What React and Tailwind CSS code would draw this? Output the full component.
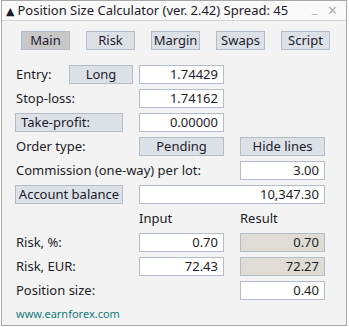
import React from "react";

const font = { fontFamily: '"Noto Sans", "DejaVu Sans", sans-serif' };

function Btn({ children, className = "", active = false }) {
  return (
    <div
      className={`h-[19px] flex items-center border border-[#b4bcc8] text-[13px] leading-none text-[#1c1c28] ${
        active ? "bg-[#c8c8c8]" : "bg-[#dce1e8]"
      } ${className}`}
    >
      {children}
    </div>
  );
}

function Field({ children, className = "", result = false }) {
  return (
    <div
      className={`h-[19px] flex items-center justify-end pr-[5px] border border-[#b4bcc8] text-[13px] leading-none text-[#1c1c28] ${
        result ? "bg-[#dedcd4]" : "bg-white"
      } ${className}`}
    >
      {children}
    </div>
  );
}

function Label({ children }) {
  return (
    <div className="h-[19px] flex items-center pl-[1px] text-[13px] leading-none text-[#1c1c28]">
      {children}
    </div>
  );
}

function C3({ children }) {
  return <div className="pl-[16px]">{children}</div>;
}

export default function App() {
  return (
    <div className="w-[349px] h-[327px] bg-white" style={font}>
      <div className="ml-[1px] w-[346px] h-[326px] border border-[#a8a8a8] bg-[#f3f3f3] flex flex-col">
        <div className="h-[20px] border-b border-[#d4d4d4] bg-[#f9f9f9] flex items-center pl-[4px] pr-[8px] text-[13px] leading-none text-[#1c1c28]">
          <span className="text-[11px] mr-[3px]">▲</span>
          <span>Position Size Calculator (ver. 2.42) Spread: 45</span>
          <span className="ml-auto text-[#b0b0b0] text-[12px] mr-[10px] -mt-[4px]">_</span>
          <span className="text-[#b0b0b0] text-[13px] font-bold">✕</span>
        </div>
        <div className="flex gap-[16px] pl-[19px] mt-[10px]">
          <Btn active className="w-[49px] justify-center">Main</Btn>
          <Btn className="w-[49px] justify-center">Risk</Btn>
          <Btn className="w-[49px] justify-center">Margin</Btn>
          <Btn className="w-[49px] justify-center">Swaps</Btn>
          <Btn className="w-[49px] justify-center">Script</Btn>
        </div>
        <div className="grid grid-cols-[124px_85px_101px] gap-y-[5px] pl-[13px] mt-[15px]">
          <div className="flex items-center justify-between">
            <Label>Entry:</Label>
            <Btn className="w-[64px] mr-[6px] justify-center">Long</Btn>
          </div>
          <Field>1.74429</Field>
          <div />

          <Label>Stop-loss:</Label>
          <Field>1.74162</Field>
          <div />

          <div className="flex">
            <Btn className="w-[108px] pl-[5px]">Take-profit:</Btn>
          </div>
          <Field>0.00000</Field>
          <div />

          <Label>Order type:</Label>
          <Btn className="justify-center">Pending</Btn>
          <C3>
            <Btn className="justify-center">Hide lines</Btn>
          </C3>

          <div className="col-span-2">
            <Label>Commission (one-way) per lot:</Label>
          </div>
          <C3>
            <Field>3.00</Field>
          </C3>

          <div className="flex">
            <Btn className="w-[108px] justify-center">Account balance</Btn>
          </div>
          <Field className="col-span-2">10,347.30</Field>

          <div />
          <div className="h-[19px] flex items-center text-[13px] text-[#1c1c28]">Input</div>
          <C3>
            <div className="h-[19px] flex items-center text-[13px] text-[#1c1c28]">Result</div>
          </C3>

          <Label>Risk, %:</Label>
          <Field>0.70</Field>
          <C3>
            <Field result>0.70</Field>
          </C3>

          <Label>Risk, EUR:</Label>
          <Field>72.43</Field>
          <C3>
            <Field result>72.27</Field>
          </C3>

          <Label>Position size:</Label>
          <div />
          <C3>
            <Field>0.40</Field>
          </C3>
        </div>
        <div className="pl-[14px] mt-[6px] text-[11px] text-[#127a7a]">www.earnforex.com</div>
      </div>
    </div>
  );
}
